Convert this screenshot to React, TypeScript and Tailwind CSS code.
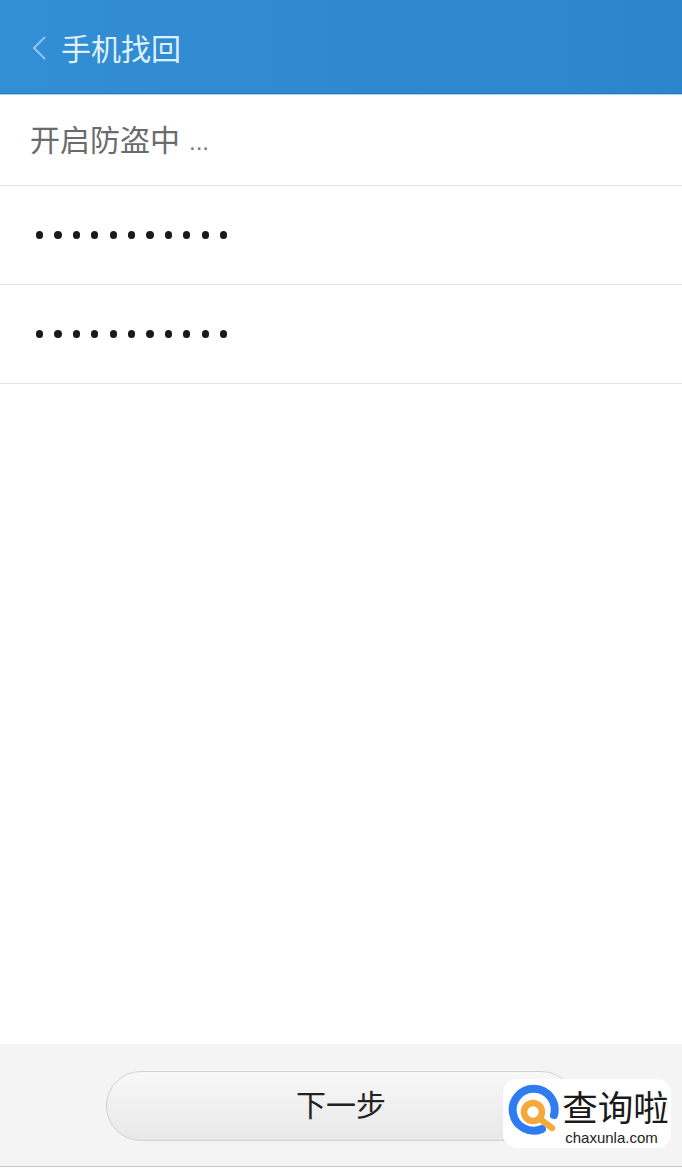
const cjk = { fontFamily: '"Noto Sans CJK SC", "Noto Sans", sans-serif' };

function Dots() {
  return (
    <div className="flex gap-[11.1px] pl-[36px]">
      {Array.from({ length: 11 }).map((_, i) => (
        <span key={i} className="block h-[7.3px] w-[7.3px] rounded-full bg-[#1a1a1a]" />
      ))}
    </div>
  );
}

function Watermark() {
  return (
    <div className="absolute left-[503px] top-[1079px] flex h-[69px] w-[168px] items-start rounded-[14px] bg-white">
      <svg width="60" height="60" viewBox="0 0 60 60" className="ml-[2px] mt-[3px] shrink-0">
        <path d="M49 33 A21 21 0 1 0 37 47" fill="none" stroke="#2f7cf0" strokeWidth="8" strokeLinecap="round" />
        <circle cx="28" cy="30" r="9" fill="none" stroke="#f5a93a" strokeWidth="6.5" />
        <path d="M35 37 L47 46" stroke="#f5a93a" strokeWidth="6.5" strokeLinecap="round" />
      </svg>
      <div className="ml-[-3px] flex w-[107px] flex-col items-center pt-[6px]">
        <span className="text-[35.5px] leading-[42px] text-[#1a1a1a]" style={{ fontFamily: '"Noto Sans CJK SC", serif' }}>查询啦</span>
        <span className="ml-[-8px] mt-[2px] text-[15px] leading-[17px] text-[#222]" style={{ fontFamily: '"Liberation Sans", sans-serif' }}>chaxunla.com</span>
      </div>
    </div>
  );
}

export default function App() {
  return (
    <div className="relative flex h-[1168px] w-[682px] flex-col overflow-hidden bg-white" style={cjk}>
      <header className="flex h-[95px] shrink-0 items-center border-b border-[#a9d3f2] bg-gradient-to-r from-[#328ed5] to-[#2d85cd] pl-[31px] shadow-[inset_0_-1px_0_#2a78b8]">
        <svg width="16" height="26" viewBox="0 0 16 26" fill="none" className="mt-[1px]">
          <path d="M14 2 L3 13 L14 24" stroke="#8cc3ec" strokeWidth="2.2" />
        </svg>
        <span className="ml-[14px] text-[30px] leading-none text-[#dff0fb]">手机找回</span>
      </header>
      <div className="flex h-[91px] shrink-0 items-center border-b border-[#e4e4e4] pb-[4px] pl-[30px]">
        <span className="text-[30px] leading-none text-[#6b6b6b]">开启防盗中</span>
        <span className="ml-[9px] mt-[8px] text-[24px] leading-none text-[#777]" style={{ fontFamily: '"Liberation Sans", sans-serif' }}>...</span>
      </div>
      <div className="flex h-[99px] shrink-0 items-center border-b border-[#e4e4e4]"><Dots /></div>
      <div className="flex h-[99px] shrink-0 items-center border-b border-[#e4e4e4]"><Dots /></div>
      <div className="flex-1" />
      <div className="mb-[1px] flex h-[123px] shrink-0 justify-center border-b border-[#c9c9c9] bg-[#f4f4f4] pt-[27px]">
        <button className="flex h-[70px] w-[470px] items-center justify-center rounded-full border border-[#d2d2d2] bg-gradient-to-b from-[#f8f8f8] to-[#e8e8e8] pb-[6px] text-[30px] leading-none text-[#222]" style={cjk}>
          下一步
        </button>
      </div>
      <Watermark />
    </div>
  );
}
